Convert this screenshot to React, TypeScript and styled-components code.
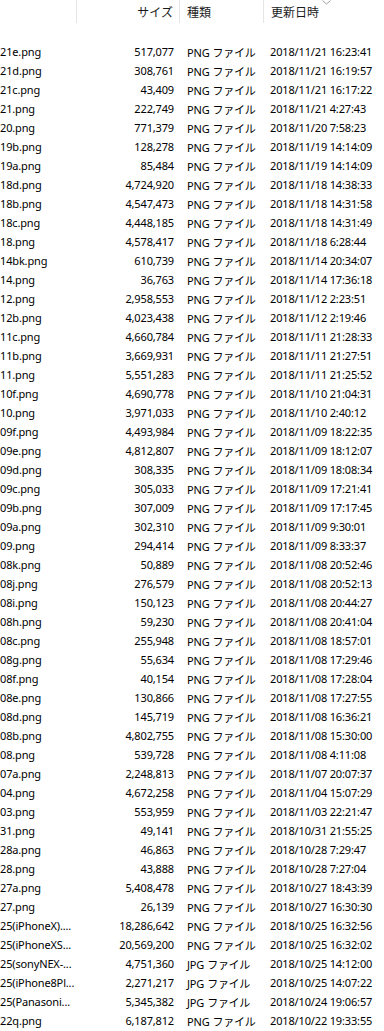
import React from 'react';
import styled, { createGlobalStyle } from 'styled-components';

const GlobalStyle = createGlobalStyle`
    html, body {
        margin: 0;
        padding: 0;
        background: #fff;
    }
    body {
        font-family: 'Noto Sans', 'Noto Sans CJK JP', sans-serif;
        color: #000;
    }
`;

const COLS = '77px 103px 84px 1fr';

type FileRow = { name: string; size: string; kind: 'PNG' | 'JPG'; date: string };

const files: FileRow[] = [
    { name: '21e.png', size: '517,077', kind: 'PNG', date: '2018/11/21 16:23:41' },
    { name: '21d.png', size: '308,761', kind: 'PNG', date: '2018/11/21 16:19:57' },
    { name: '21c.png', size: '43,409', kind: 'PNG', date: '2018/11/21 16:17:22' },
    { name: '21.png', size: '222,749', kind: 'PNG', date: '2018/11/21 4:27:43' },
    { name: '20.png', size: '771,379', kind: 'PNG', date: '2018/11/20 7:58:23' },
    { name: '19b.png', size: '128,278', kind: 'PNG', date: '2018/11/19 14:14:09' },
    { name: '19a.png', size: '85,484', kind: 'PNG', date: '2018/11/19 14:14:09' },
    { name: '18d.png', size: '4,724,920', kind: 'PNG', date: '2018/11/18 14:38:33' },
    { name: '18b.png', size: '4,547,473', kind: 'PNG', date: '2018/11/18 14:31:58' },
    { name: '18c.png', size: '4,448,185', kind: 'PNG', date: '2018/11/18 14:31:49' },
    { name: '18.png', size: '4,578,417', kind: 'PNG', date: '2018/11/18 6:28:44' },
    { name: '14bk.png', size: '610,739', kind: 'PNG', date: '2018/11/14 20:34:07' },
    { name: '14.png', size: '36,763', kind: 'PNG', date: '2018/11/14 17:36:18' },
    { name: '12.png', size: '2,958,553', kind: 'PNG', date: '2018/11/12 2:23:51' },
    { name: '12b.png', size: '4,023,438', kind: 'PNG', date: '2018/11/12 2:19:46' },
    { name: '11c.png', size: '4,660,784', kind: 'PNG', date: '2018/11/11 21:28:33' },
    { name: '11b.png', size: '3,669,931', kind: 'PNG', date: '2018/11/11 21:27:51' },
    { name: '11.png', size: '5,551,283', kind: 'PNG', date: '2018/11/11 21:25:52' },
    { name: '10f.png', size: '4,690,778', kind: 'PNG', date: '2018/11/10 21:04:31' },
    { name: '10.png', size: '3,971,033', kind: 'PNG', date: '2018/11/10 2:40:12' },
    { name: '09f.png', size: '4,493,984', kind: 'PNG', date: '2018/11/09 18:22:35' },
    { name: '09e.png', size: '4,812,807', kind: 'PNG', date: '2018/11/09 18:12:07' },
    { name: '09d.png', size: '308,335', kind: 'PNG', date: '2018/11/09 18:08:34' },
    { name: '09c.png', size: '305,033', kind: 'PNG', date: '2018/11/09 17:21:41' },
    { name: '09b.png', size: '307,009', kind: 'PNG', date: '2018/11/09 17:17:45' },
    { name: '09a.png', size: '302,310', kind: 'PNG', date: '2018/11/09 9:30:01' },
    { name: '09.png', size: '294,414', kind: 'PNG', date: '2018/11/09 8:33:37' },
    { name: '08k.png', size: '50,889', kind: 'PNG', date: '2018/11/08 20:52:46' },
    { name: '08j.png', size: '276,579', kind: 'PNG', date: '2018/11/08 20:52:13' },
    { name: '08i.png', size: '150,123', kind: 'PNG', date: '2018/11/08 20:44:27' },
    { name: '08h.png', size: '59,230', kind: 'PNG', date: '2018/11/08 20:41:04' },
    { name: '08c.png', size: '255,948', kind: 'PNG', date: '2018/11/08 18:57:01' },
    { name: '08g.png', size: '55,634', kind: 'PNG', date: '2018/11/08 17:29:46' },
    { name: '08f.png', size: '40,154', kind: 'PNG', date: '2018/11/08 17:28:04' },
    { name: '08e.png', size: '130,866', kind: 'PNG', date: '2018/11/08 17:27:55' },
    { name: '08d.png', size: '145,719', kind: 'PNG', date: '2018/11/08 16:36:21' },
    { name: '08b.png', size: '4,802,755', kind: 'PNG', date: '2018/11/08 15:30:00' },
    { name: '08.png', size: '539,728', kind: 'PNG', date: '2018/11/08 4:11:08' },
    { name: '07a.png', size: '2,248,813', kind: 'PNG', date: '2018/11/07 20:07:37' },
    { name: '04.png', size: '4,672,258', kind: 'PNG', date: '2018/11/04 15:07:29' },
    { name: '03.png', size: '553,959', kind: 'PNG', date: '2018/11/03 22:21:47' },
    { name: '31.png', size: '49,141', kind: 'PNG', date: '2018/10/31 21:55:25' },
    { name: '28a.png', size: '46,863', kind: 'PNG', date: '2018/10/28 7:29:47' },
    { name: '28.png', size: '43,888', kind: 'PNG', date: '2018/10/28 7:27:04' },
    { name: '27a.png', size: '5,408,478', kind: 'PNG', date: '2018/10/27 18:43:39' },
    { name: '27.png', size: '26,139', kind: 'PNG', date: '2018/10/27 16:30:30' },
    { name: '25(iPhoneX)....', size: '18,286,642', kind: 'PNG', date: '2018/10/25 16:32:56' },
    { name: '25(iPhoneXS...', size: '20,569,200', kind: 'PNG', date: '2018/10/25 16:32:02' },
    { name: '25(sonyNEX-...', size: '4,751,360', kind: 'JPG', date: '2018/10/25 14:12:00' },
    { name: '25(iPhone8Pl...', size: '2,271,217', kind: 'JPG', date: '2018/10/25 14:07:22' },
    { name: '25(Panasoni...', size: '5,345,382', kind: 'JPG', date: '2018/10/24 19:06:57' },
    { name: '22q.png', size: '6,187,812', kind: 'PNG', date: '2018/10/22 19:33:55' },
];

const Page = styled.div`
    width: 384px;
    overflow: hidden;
`;

const Header = styled.div`
    display: grid;
    grid-template-columns: ${COLS};
    height: 23px;
    margin-bottom: 19px;
`;

const HeadCell = styled.div<{ $align?: 'left' | 'right'; $last?: boolean }>`
    position: relative;
    display: flex;
    align-items: center;
    justify-content: ${(p) => (p.$align === 'right' ? 'flex-end' : 'flex-start')};
    padding: 0 ${(p) => (p.$align === 'right' ? '6px' : '0')} 0 ${(p) => (p.$align === 'right' ? '0' : '7px')};
    border-right: ${(p) => (p.$last ? 'none' : '1px solid #e5e5e5')};
    font-family: 'Noto Sans CJK JP', sans-serif;
    font-size: 12px;
    color: #1a1a1a;
`;

const SortMark = styled.svg`
    position: absolute;
    top: 0;
    left: 58px;
`;

const List = styled.div`
    display: flex;
    flex-direction: column;
`;

const Row = styled.div`
    display: grid;
    grid-template-columns: ${COLS};
    height: 19px;
    align-items: center;
    font-size: 11px;
    letter-spacing: -0.15px;
    white-space: nowrap;
`;

const NameCell = styled.div`
    overflow: hidden;
`;

const SizeCell = styled.div`
    text-align: right;
    padding-right: 6px;
`;

const KindCell = styled.div`
    padding-left: 7px;
    span {
        font-family: 'Noto Sans CJK JP', sans-serif;
        font-size: 11px;
        letter-spacing: -0.3px;
        margin-left: 3px;
    }
`;

const DateCell = styled.div`
    padding-left: 6px;
`;

export default function App() {
    return (
        <Page>
            <GlobalStyle />
            <Header>
                <HeadCell />
                <HeadCell $align="right">サイズ</HeadCell>
                <HeadCell>種類</HeadCell>
                <HeadCell $last>
                    更新日時
                    <SortMark width="9" height="5" viewBox="0 0 9 5">
                        <path d="M0.5 0.5 L4.5 4 L8.5 0.5" fill="none" stroke="#a0a0a0" strokeWidth="1" />
                    </SortMark>
                </HeadCell>
            </Header>
            <List>
                {files.map((f, i) => (
                    <Row key={i}>
                        <NameCell>{f.name}</NameCell>
                        <SizeCell>{f.size}</SizeCell>
                        <KindCell>
                            {f.kind}
                            <span>ファイル</span>
                        </KindCell>
                        <DateCell>{f.date}</DateCell>
                    </Row>
                ))}
            </List>
        </Page>
    );
}
